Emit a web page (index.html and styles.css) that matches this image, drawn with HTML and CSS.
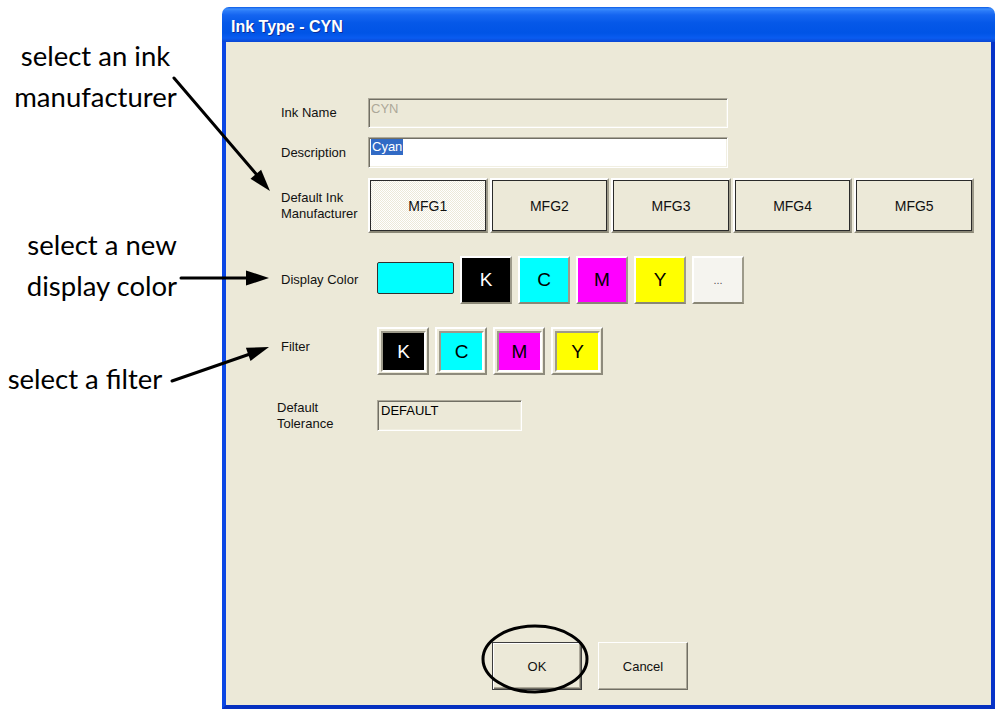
FILE: index.html
```html
<!DOCTYPE html>
<html>
<head>
<meta charset="utf-8">
<title>Ink Type - CYN</title>
<link rel="stylesheet" href="styles.css">
</head>
<body>
<div class="page">
  <div class="callout callout-mfg">select an ink<br>manufacturer</div>
  <div class="callout callout-color">select a new<br>display color</div>
  <div class="callout callout-filter">select a filter</div>

  <div class="window">
    <div class="titlebar">Ink Type - CYN</div>
    <div class="client">
      <div class="row row-name">
        <div class="label">Ink Name</div>
        <div class="field field-disabled field-wide">CYN</div>
      </div>
      <div class="row row-desc">
        <div class="label">Description</div>
        <div class="field field-white field-wide"><span class="selected">Cyan</span></div>
      </div>
      <div class="row row-mfg">
        <div class="label">Default Ink<br>Manufacturer</div>
        <div class="mfg-group">
          <div class="mfg mfg-checked"><span class="mfg-face">MFG1</span></div>
          <div class="mfg"><span class="mfg-face">MFG2</span></div>
          <div class="mfg"><span class="mfg-face">MFG3</span></div>
          <div class="mfg"><span class="mfg-face">MFG4</span></div>
          <div class="mfg"><span class="mfg-face">MFG5</span></div>
        </div>
      </div>
      <div class="row row-color">
        <div class="label label-wide">Display Color</div>
        <div class="swatch"></div>
        <div class="color-group">
          <div class="cbtn c-k">K</div>
          <div class="cbtn c-c">C</div>
          <div class="cbtn c-m">M</div>
          <div class="cbtn c-y">Y</div>
          <div class="cbtn c-more">...</div>
        </div>
      </div>
      <div class="row row-filter">
        <div class="label label-wide label-up">Filter</div>
        <div class="filter-group">
          <div class="fbtn"><span class="fface c-k">K</span></div>
          <div class="fbtn"><span class="fface c-c">C</span></div>
          <div class="fbtn"><span class="fface c-m">M</span></div>
          <div class="fbtn"><span class="fface c-y">Y</span></div>
        </div>
      </div>
      <div class="row row-tol">
        <div class="label label-tol">Default<br>Tolerance</div>
        <div class="field field-disabled field-tol">DEFAULT</div>
      </div>
      <div class="footer">
        <div class="btn btn-default">OK</div>
        <div class="btn">Cancel</div>
      </div>
    </div>
  </div>

  <svg class="overlay" width="997" height="709" viewBox="0 0 997 709">
    <g stroke="#000" stroke-width="3" fill="none" stroke-linecap="round">
      <line x1="174" y1="78" x2="257" y2="175"/>
      <line x1="181" y1="278" x2="248" y2="278"/>
      <line x1="172" y1="381" x2="250" y2="354"/>
    </g>
    <g fill="#000">
      <polygon points="270,191 250.5,178.7 261.1,169.7"/>
      <polygon points="269,278 246,270.5 246,285.5"/>
      <polygon points="269,347 250.5,360.9 245.9,347.7"/>
    </g>
    <ellipse cx="535" cy="659" rx="52" ry="33" fill="none" stroke="#000" stroke-width="3"/>
  </svg>
</div>
</body>
</html>
```

FILE: styles.css
```css
html, body {
  margin: 0;
  padding: 0;
  background: #ffffff;
}

.page {
  position: relative;
  width: 997px;
  height: 709px;
  overflow: hidden;
  box-sizing: border-box;
  padding: 7px 0 0 222px;
  font-family: "Liberation Sans", Arial, sans-serif;
}

/* callouts */
.callout {
  position: absolute;
  font-family: Lato, "Open Sans", sans-serif;
  font-size: 27.5px;
  line-height: 41px;
  color: #000;
  text-align: center;
  white-space: nowrap;
}
.callout-mfg { left: 0; top: 35px; width: 191px; }
.callout-color { left: 2px; top: 224px; width: 200px; }
.callout-filter { left: 0; top: 358px; width: 170px; }

.overlay {
  position: absolute;
  left: 0;
  top: 0;
  pointer-events: none;
}

/* window */
.window {
  width: 773px;
  height: 702px;
  display: flex;
  flex-direction: column;
}

.titlebar {
  height: 35px;
  box-sizing: border-box;
  padding: 4px 0 0 9px;
  display: flex;
  align-items: center;
  border-radius: 7px 7px 0 0;
  background: linear-gradient(to bottom,
    #0a5ae6 0px, #3d8efc 2px, #2a7af8 4px, #1565f0 8px,
    #0558e8 16px, #0054e6 26px, #0a5cf0 31px, #0a46d4 35px);
  color: #fff;
  font-weight: bold;
  font-size: 16px;
  text-shadow: 1px 1px 0 #0a2e9a;
}

.client {
  flex: 1;
  display: flex;
  flex-direction: column;
  background: #ece9d8;
  border-style: solid;
  border-width: 0 4px 4px 4px;
  border-color: #0842dc #0733c8 #0530c0 #0b47e4;
  padding: 56px 0 15px 55px;
  font-size: 13px;
  color: #111;
}

.row {
  display: flex;
  align-items: center;
}
.row-name { height: 30px; margin-bottom: 9px; }
.row-desc { height: 31px; margin-bottom: 10px; }
.row-mfg { height: 55px; margin-bottom: 23px; }
.row-color { height: 48px; margin-bottom: 23px; }
.row-filter { height: 48px; margin-bottom: 25px; }
.row-tol { height: 31px; }

.label {
  width: 87px;
  flex: none;
  line-height: 16px;
}
.label-wide { width: 96px; }
.label-up { padding-bottom: 8px; }
.label-tol { width: 100px; margin-left: -4px; }

/* fields */
.field {
  box-sizing: border-box;
  height: 100%;
  border: 1px solid;
  border-color: #aca899 #ffffff #ffffff #aca899;
  box-shadow: inset 1px 1px 0 #716f64, inset -1px -1px 0 #f1efe2;
  padding: 2px 2px;
  line-height: 15px;
}
.field-wide { width: 360px; }
.field-disabled { background: #ece9d8; color: #aca899; }
.field-tol { width: 145px; color: #000; padding-left: 3px; }
.field-white { background: #fff; padding: 1px 2px; }
.selected {
  display: inline-block;
  background: #316ac5;
  color: #fff;
  line-height: 16px;
  padding: 0 1px;
}

/* manufacturer buttons */
.mfg-group {
  display: flex;
  gap: 2px;
  width: 606px;
  height: 100%;
}
.mfg {
  flex: 1;
  box-sizing: border-box;
  border: 2px solid;
  border-color: #ffffff #9d9a8a #8a8776 #ffffff;
  background: #ece9d8;
  display: flex;
}
.mfg-face {
  flex: 1;
  display: flex;
  align-items: center;
  justify-content: center;
  border: 1px solid #2a2a2a;
  font-size: 14px;
}
.mfg-checked .mfg-face {
  background: repeating-conic-gradient(#ffffff 0 25%, #ece9d8 0 50%) 0 0 / 2px 2px;
}

/* display colour */
.swatch {
  width: 77px;
  height: 32px;
  box-sizing: border-box;
  background: #00ffff;
  border: 1px solid #303030;
  border-radius: 2px;
  margin-top: -4px;
  margin-right: 6px;
  flex: none;
}
.color-group, .filter-group {
  display: flex;
  gap: 6px;
  height: 100%;
}
.cbtn {
  width: 52px;
  box-sizing: border-box;
  border-style: solid;
  border-width: 2px;
  border-color: #ffffff #9d9a8a #8a8776 #ffffff;
  display: flex;
  align-items: center;
  justify-content: center;
  font-size: 19px;
}
.c-k { background: #000; color: #fff; }
.c-c { background: #00ffff; color: #000; }
.c-m { background: #ff00ff; color: #000; }
.c-y { background: #ffff00; color: #000; }
.c-more { background: #f5f4ef; color: #555; font-size: 11px; }

.fbtn {
  width: 52px;
  box-sizing: border-box;
  border: 2px solid;
  border-color: #ffffff #8e8b7c #8e8b7c #ffffff;
  padding: 2px 1px 1px 2px;
  background: #ece9d8;
  display: flex;
}
.fface {
  flex: 1;
  border: 2px solid;
  border-color: #9d9a8a #ffffff #ffffff #9d9a8a;
  display: flex;
  align-items: center;
  justify-content: center;
  font-size: 19px;
}

/* footer */
.footer {
  margin-top: auto;
  display: flex;
  gap: 16px;
  padding-left: 211px;
}
.btn {
  width: 90px;
  height: 48px;
  box-sizing: border-box;
  border: 1px solid;
  border-color: #ffffff #716f64 #716f64 #ffffff;
  box-shadow: inset -1px -1px 0 #aca899;
  display: flex;
  align-items: center;
  justify-content: center;
}
.btn-default {
  border-color: #3c3c3c;
  box-shadow: inset 1px 1px 0 #ffffff, inset -1px -1px 0 #716f64, inset -2px -2px 0 #aca899;
}
```
